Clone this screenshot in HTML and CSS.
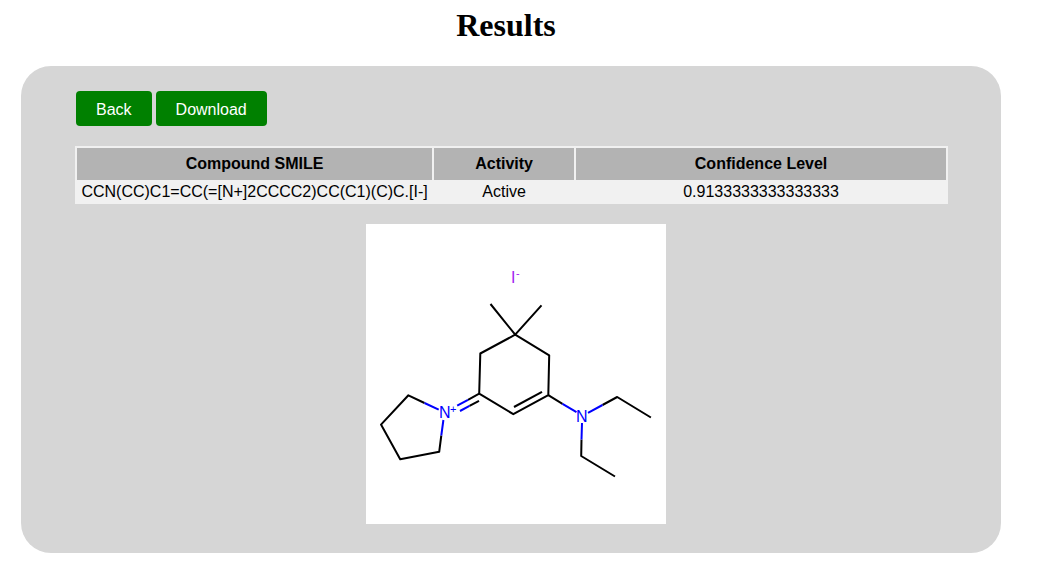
FILE: index.html
```html
<!DOCTYPE html>
<html lang="en">
<head>
<meta charset="utf-8">
<meta name="viewport" content="width=device-width, initial-scale=1">
<title>Results</title>
<link rel="stylesheet" href="styles.css">
</head>
<body>
<h1 class="title">Results</h1>
<main class="panel">
  <div class="actions">
    <button class="button" type="button">Back</button>
    <button class="button" type="button">Download</button>
  </div>
  <table class="results">
    <colgroup>
      <col class="col-smile">
      <col class="col-activity">
      <col class="col-confidence">
    </colgroup>
    <thead>
      <tr><th scope="col">Compound SMILE</th><th scope="col">Activity</th><th scope="col">Confidence Level</th></tr>
    </thead>
    <tbody>
      <tr><td>CCN(CC)C1=CC(=[N+]2CCCC2)CC(C1)(C)C.[I-]</td><td>Active</td><td>0.9133333333333333</td></tr>
    </tbody>
  </table>
  <figure class="molecule">
    <svg class="structure" viewBox="366 224 300 300" role="img" aria-label="Compound structure">
      <g class="bond">
        <path d="M490.500 304L515.200 334.700L541.500 305.300"/>
        <path d="M515.200 334.700L480.300 353.500L479.200 393.600L513.300 414.200L548.300 395.200L549.200 355.300Z"/>
        <path d="M514 407L542 391.800"/>
        <path d="M479.200 393.600L468 399.800M479 400.800L469.500 405.900"/>
        <path d="M424.500 403L408.400 395.300L381 424.600L400.200 459.200L439.200 451.800L441.300 435.500"/>
        <path d="M548.300 395.200L562.500 403.800"/>
        <path d="M602.500 405L617.200 397L650.900 417.500"/>
        <path d="M581.500 439.500L581.200 456L615 476.500"/>
      </g>
      <g class="bond nitrogen-bond">
        <path d="M424.500 403L438.700 409.700M443.400 420L441.300 435.500"/>
        <path d="M468 399.800L457.200 405.700M469.500 405.900L460 411"/>
        <path d="M562.500 403.800L576.500 412.200M588 412.800L602.500 405M582 423L581.500 439.500"/>
      </g>
      <text class="atom nitrogen" x="439" y="418">N</text>
      <text class="charge nitrogen" x="450" y="413">+</text>
      <text class="atom nitrogen" x="576" y="422">N</text>
      <text class="atom iodine" x="511" y="283">I</text>
      <text class="charge iodine" x="516" y="277">-</text>
    </svg>
  </figure>
</main>
</body>
</html>
```
FILE: styles.css
```css
body {
  margin: 0;
  padding: 8px 45px 16px 21px;
  background: #fff;
  color: #000;
  font-family: "Liberation Sans", Arial, sans-serif;
  font-size: 16px;
}

.title {
  margin: 0 0 24px;
  padding-right: 10px;
  font-family: "Liberation Serif", "Times New Roman", serif;
  font-size: 32px;
  line-height: 34px;
  text-align: center;
}

.panel {
  padding: 25px 53px 29px 54px;
  border-radius: 30px;
  background: #d6d6d6;
}

.actions {
  display: flex;
  gap: 4px;
  margin-bottom: 20px;
  padding-left: 1px;
}

.button {
  padding: 10px 20px 7px;
  border: 0;
  border-radius: 4px;
  background: #008000;
  color: #fff;
  font: inherit;
  line-height: 18px;
  cursor: pointer;
}

.results {
  width: 100%;
  border-collapse: collapse;
  background: #f1f1f1;
  line-height: 18px;
  text-align: center;
}

.col-smile {
  width: 41%;
}

.col-activity {
  width: 142px;
}

.results th {
  padding: 7px 5px;
  border: 2px solid #f1f1f1;
  background: #b3b3b3;
}

.results td {
  padding: 1px 5px 3px;
}

.molecule {
  margin: 20px 0 0;
  padding-left: 9px;
}

.structure {
  display: block;
  width: 100%;
  max-width: 300px;
  margin: 0 auto;
  background: #fff;
}

.bond {
  fill: none;
  stroke: #000;
  stroke-width: 2px;
  stroke-linejoin: round;
}

.nitrogen-bond {
  stroke: #00f;
}

.atom {
  font-size: 16px;
}

.charge {
  font-size: 11px;
}

.nitrogen {
  fill: #00f;
}

.iodine {
  fill: #a020f0;
}
```
